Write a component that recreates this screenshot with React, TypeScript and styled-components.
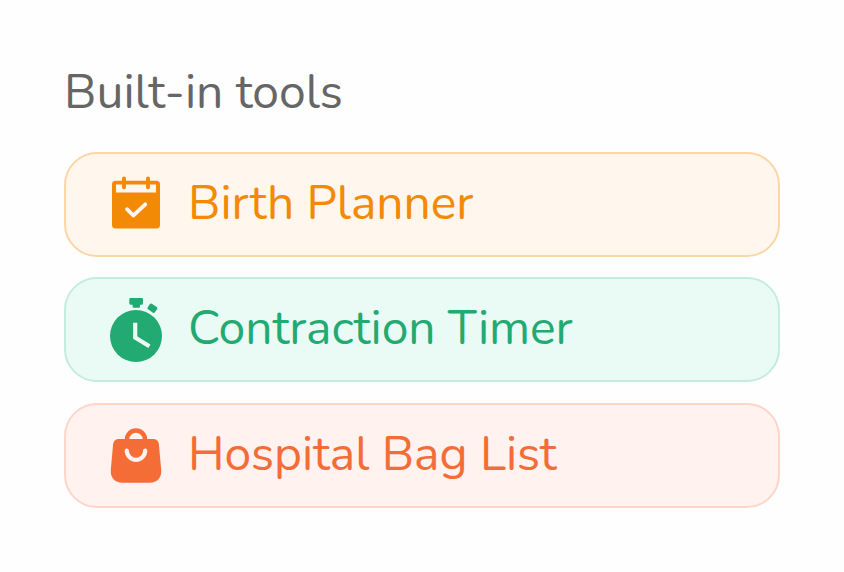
import React from 'react';
import styled, { createGlobalStyle } from 'styled-components';

const GlobalStyle = createGlobalStyle`
  * { box-sizing: border-box; }
  body {
    margin: 0;
    background: #fefefe;
    font-family: Nunito, Lato, sans-serif;
  }
`;

const Page = styled.main`
  height: 572px;
  padding: 62px 64px 0;
  overflow: hidden;
`;

const Title = styled.h2`
  margin: 0 0 30px;
  height: 60px;
  line-height: 60px;
  font-size: 48px;
  font-weight: 400;
  color: #666667;
  white-space: nowrap;
`;

const ToolList = styled.div`
  display: flex;
  flex-direction: column;
  gap: 20.4px;
`;

const ToolCard = styled.button<{ $ink: string; $fill: string; $edge: string }>`
  display: flex;
  align-items: center;
  gap: 24px;
  width: 716px;
  height: 105px;
  padding: 0 42px;
  border: 2px solid ${(p) => p.$edge};
  border-radius: 33px;
  background: ${(p) => p.$fill};
  color: ${(p) => p.$ink};
  font-family: inherit;
  text-align: left;
`;

const ToolIcon = styled.svg`
  display: block;
  flex: none;
  width: 56px;
  height: 72px;
`;

const ToolName = styled.span`
  font-size: 48px;
  line-height: 60px;
  margin-top: -3px;
  letter-spacing: -0.06px;
  white-space: nowrap;
`;

const CalendarIcon = ({ fill }: { fill: string }) => (
  <ToolIcon viewBox="108 169 56 72">
    <rect x="112" y="180.8" width="48" height="47.8" rx="3.5" fill="currentColor" />
    <path d="M116 184.5h40v8h-40z" fill={fill} />
    <path d="M124 178.4v8.8M148 178.4v8.8" stroke="currentColor" strokeWidth="4" strokeLinecap="round" />
    <path d="m127 209.2 6.3 6.3 12-11.2" fill="none" stroke={fill} strokeWidth="3.8" strokeLinecap="round" strokeLinejoin="round" />
  </ToolIcon>
);

const StopwatchIcon = ({ fill }: { fill: string }) => (
  <ToolIcon viewBox="108 294 56 72">
    <circle cx="136" cy="336" r="26" fill="currentColor" />
    <path d="M130.5 298h11.2q1.3 0 1.3 1.3v3.9q0 1.5-1.5 1.5H140v1.8q0 1.2-1.2 1.2h-5q-1.2 0-1.2-1.2v-1.8h-1.8q-1.5 0-1.5-1.5v-3.9q0-1.3 1.2-1.3Z" fill="currentColor" />
    <rect x="148" y="304.8" width="8.8" height="6.8" rx="1.4" transform="rotate(34 152.4 308.2)" fill="currentColor" />
    <path d="M135.2 322.7v14.8l14.2 8.7" fill="none" stroke={fill} strokeWidth="4.2" />
  </ToolIcon>
);

const BagIcon = ({ fill }: { fill: string }) => (
  <ToolIcon viewBox="108 419 56 72">
    <path d="M127 441v-1.5a9 9 0 0 1 18 0v1.5" fill="none" stroke="currentColor" strokeWidth="4.4" />
    <path d="M119 439h34c3.5 0 5.5 2 5.9 5.3l2.3 25.7c.6 7.5-4 12.7-11.5 12.7h-27.4c-7.5 0-12.1-5.2-11.5-12.7l2.3-25.7c.4-3.3 2.4-5.3 5.9-5.3Z" fill="currentColor" />
    <path d="M126.8 450.5a9.2 9.4 0 0 0 18.4 0" fill="none" stroke={fill} strokeWidth="4.2" strokeLinecap="round" />
  </ToolIcon>
);

const tools = [
  { name: 'Birth Planner', Icon: CalendarIcon, ink: '#f28a05', fill: '#fff6ed', edge: '#fcd6a6' },
  { name: 'Contraction Timer', Icon: StopwatchIcon, ink: '#22aa72', fill: '#eafbf6', edge: '#c4ecdf' },
  { name: 'Hospital Bag List', Icon: BagIcon, ink: '#f46d37', fill: '#fff2ef', edge: '#fdd5c9' },
];

export default function App() {
  return (
    <>
      <GlobalStyle />
      <Page>
        <Title>Built-in tools</Title>
        <ToolList>
          {tools.map(({ name, Icon, ink, fill, edge }) => (
            <ToolCard key={name} $ink={ink} $fill={fill} $edge={edge}>
              <Icon fill={fill} />
              <ToolName>{name}</ToolName>
            </ToolCard>
          ))}
        </ToolList>
      </Page>
    </>
  );
}
